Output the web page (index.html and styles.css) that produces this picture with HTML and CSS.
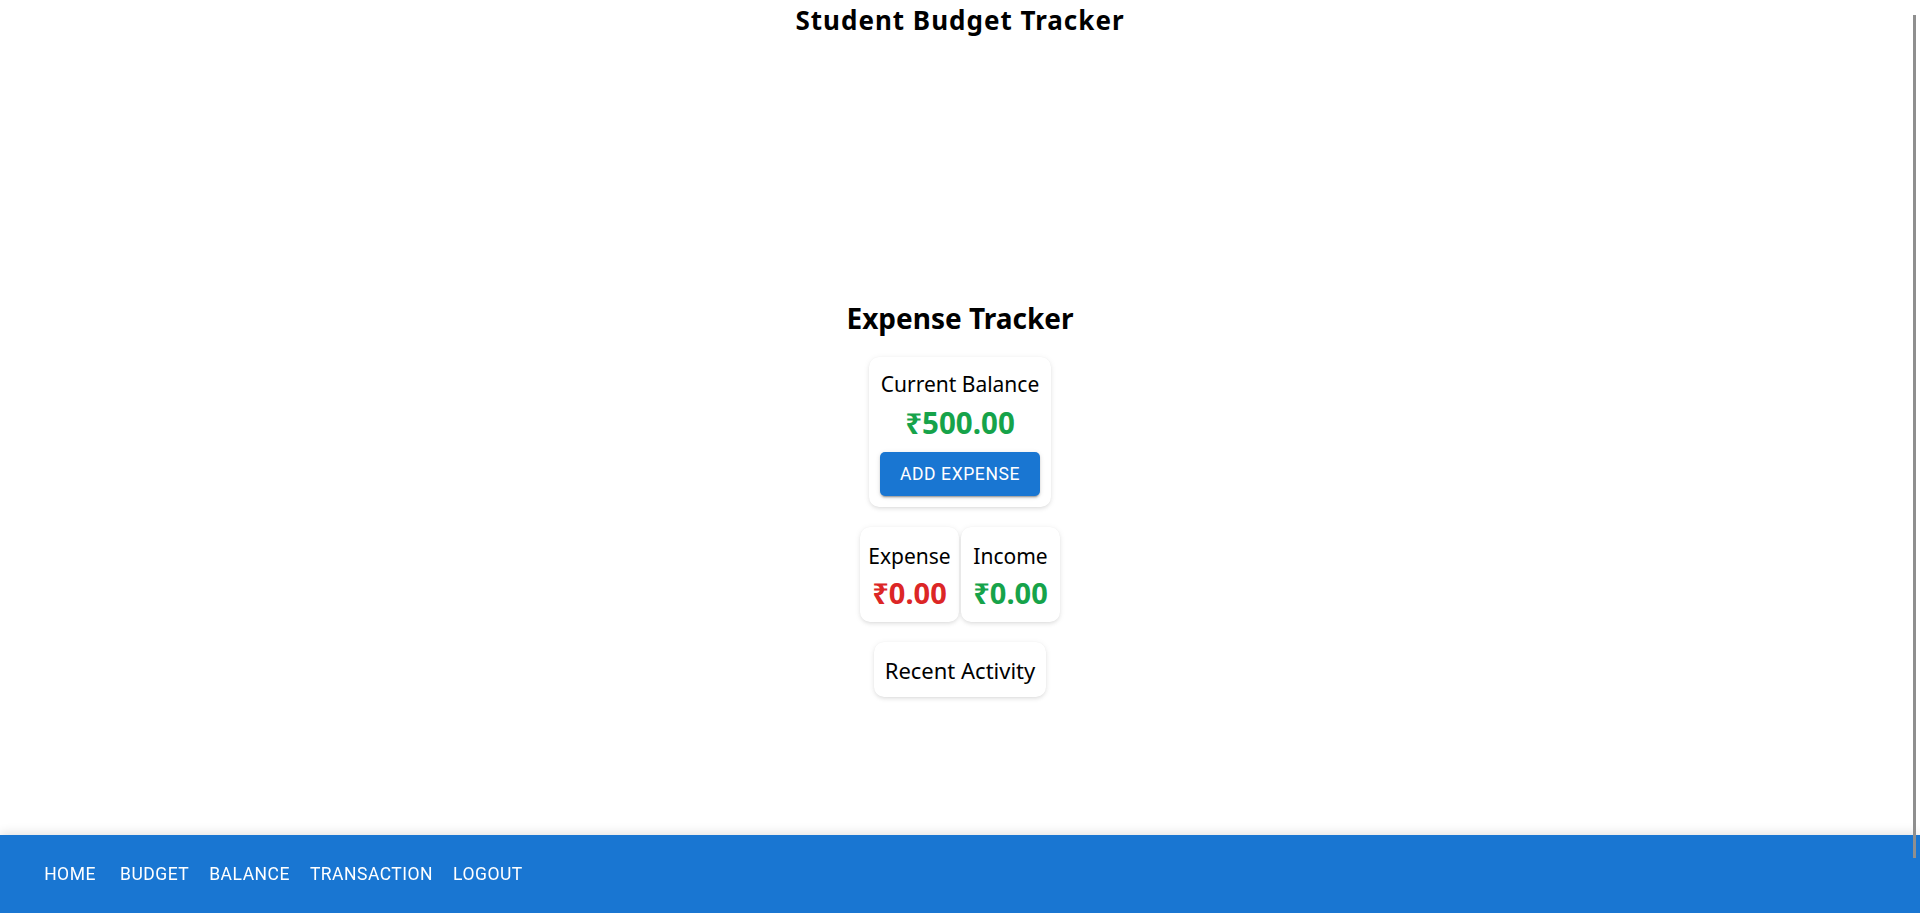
FILE: index.html
```html
<!DOCTYPE html>
<html lang="en">
<head>
<meta charset="utf-8">
<title>Student Budget Tracker</title>
<link rel="stylesheet" href="styles.css">
</head>
<body>
<header class="site-header">
  <h3 class="site-title">Student Budget Tracker</h3>
</header>
<main class="tracker">
  <h2 class="tracker-title">Expense Tracker</h2>
  <section class="card balance-card">
    <div class="card-label">Current Balance</div>
    <div class="amount amount-balance">₹500.00</div>
    <button class="btn-contained" type="button">Add Expense</button>
  </section>
  <div class="summary-row">
    <section class="card summary-card">
      <div class="card-label">Expense</div>
      <div class="amount amount-expense">₹0.00</div>
    </section>
    <section class="card summary-card">
      <div class="card-label">Income</div>
      <div class="amount amount-income">₹0.00</div>
    </section>
  </div>
  <section class="card activity-card">
    <div class="activity-title">Recent Activity</div>
  </section>
</main>
<footer class="bottom-bar">
  <nav class="bottom-nav">
    <a class="nav-btn" href="#">Home</a>
    <a class="nav-btn" href="#">Budget</a>
    <a class="nav-btn" href="#">Balance</a>
    <a class="nav-btn" href="#">Transaction</a>
    <a class="nav-btn" href="#">Logout</a>
  </nav>
</footer>
<div class="scroll-thumb" aria-hidden="true"></div>
</body>
</html>
```
FILE: styles.css
```css
* { box-sizing: border-box; }

html, body {
  margin: 0;
  padding: 0;
  height: 100%;
  overflow: hidden;
  background: #ffffff;
}

body {
  font-family: "Noto Sans", "Open Sans", sans-serif;
  color: #000000;
  font-size: 21px;
}

.site-header {
  display: flex;
  justify-content: center;
  padding-top: 3px;
}

.site-title {
  margin: 0;
  font-size: 26px;
  line-height: 34px;
  letter-spacing: 1px;
  font-weight: 700;
}

.tracker {
  display: flex;
  flex-direction: column;
  align-items: center;
  padding-top: 262px;
}

.tracker-title {
  margin: 0;
  font-size: 28px;
  line-height: 38px;
  font-weight: 700;
}

.card {
  background: #fff;
  border-radius: 10px;
  box-shadow: 0 2px 4px -1px rgba(0,0,0,0.10), 0 1px 6px 0 rgba(0,0,0,0.07), 0 0 1px rgba(0,0,0,0.04);
}

.balance-card {
  margin-top: 20px;
  padding: 14px 11px 11px;
  display: flex;
  flex-direction: column;
  align-items: center;
}

.card-label {
  font-size: 21px;
  line-height: 27px;
  text-align: center;
  white-space: nowrap;
}

.amount {
  font-weight: 700;
  text-align: center;
  white-space: nowrap;
}

.amount-balance {
  font-size: 29.5px;
  line-height: 38px;
  margin: 6px 0 10px;
  color: #16a34a;
}

.btn-contained {
  font-family: Roboto, "Liberation Sans", sans-serif;
  font-weight: 400;
  font-size: 17.5px;
  letter-spacing: 0.6px;
  text-transform: uppercase;
  color: #fff;
  background: #1976d2;
  border: 0;
  border-radius: 5px;
  height: 44px;
  padding: 0 20px;
  box-shadow: 0 3px 1px -2px rgba(0,0,0,0.2), 0 2px 2px 0 rgba(0,0,0,0.14), 0 1px 5px 0 rgba(0,0,0,0.12);
  cursor: pointer;
}

.summary-row {
  margin-top: 20px;
  display: flex;
  gap: 2px;
}

.summary-card {
  width: 99px;
  padding: 16px 0 10px;
  display: flex;
  flex-direction: column;
  align-items: center;
}

.summary-card .amount {
  font-size: 29px;
  line-height: 38px;
  margin-top: 4px;
}

.amount-expense { color: #dc2626; }
.amount-income { color: #16a34a; }

.activity-card {
  margin-top: 20px;
  padding: 13px 11px 12px;
}

.activity-title {
  font-size: 22px;
  line-height: 30px;
  white-space: nowrap;
}

.bottom-bar {
  position: fixed;
  left: 0;
  right: 0;
  bottom: 0;
  height: 78px;
  background: #1976d2;
  box-shadow: 0 -2px 10px rgba(0,0,0,0.12);
  display: flex;
  align-items: center;
  padding-left: 30px;
}

.bottom-nav {
  display: flex;
}

.nav-btn {
  font-family: Roboto, "Liberation Sans", sans-serif;
  font-weight: 400;
  font-size: 17.5px;
  letter-spacing: 0.5px;
  text-transform: uppercase;
  color: #fff;
  text-decoration: none;
  min-width: 80px;
  padding: 7px 10px;
  line-height: 30px;
  text-align: center;
}

.scroll-thumb {
  position: fixed;
  top: 15px;
  right: 4px;
  width: 3px;
  height: 843px;
  background: #8f8f8f;
  z-index: 10;
}
```
